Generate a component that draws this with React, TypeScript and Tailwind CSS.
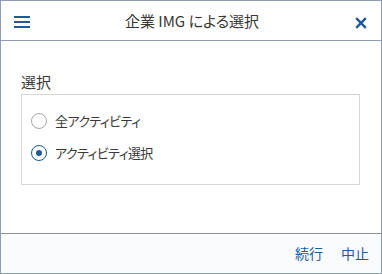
import React from "react";

const font = {
  fontFamily: '"Noto Sans CJK JP", "Noto Sans", sans-serif',
};

export default function App() {
  return (
    <div
      className="w-[382px] h-[274px] border border-[#8d9db3] flex flex-col bg-white text-[#383838] [font-feature-settings:'palt']"
      style={font}
    >
      <header className="h-[40px] border-b border-[#8d9db3] flex items-center relative shrink-0">
        <button className="absolute left-[13px] top-[15px] flex flex-col gap-[3px] w-[16px]">
          <span className="block h-[2px] w-[16px] bg-[#1d5a96]" />
          <span className="block h-[2px] w-[16px] bg-[#1d5a96]" />
          <span className="block h-[2px] w-[16px] bg-[#1d5a96]" />
        </button>
        <h1 className="flex-1 text-center text-[15px] leading-[20px] font-normal pl-[2px]">
          企業 IMG による選択
        </h1>
        <button className="absolute right-[14px] top-[16px] w-[12px] h-[12px]">
          <svg viewBox="0 0 12 12" width="12" height="12">
            <path
              d="M1.2 1.2 L10.8 10.8 M10.8 1.2 L1.2 10.8"
              stroke="#1d5a96"
              strokeWidth="2.4"
              strokeLinecap="butt"
            />
          </svg>
        </button>
      </header>

      <main className="flex-1 pt-[31px] px-[20px]">
        <div className="text-[15px] leading-[20px] mb-[2px]">選択</div>
        <div className="w-[339px] h-[91px] border border-[#d6d6d6] pt-[10px] pl-[9px]">
          <label className="h-[32px] flex items-center gap-[8px] text-[13px] tracking-[-0.6px]">
            <span className="w-[16px] h-[16px] rounded-full border-[1.5px] border-[#a8a8a8] bg-white" />
            <span>全アクティビティ</span>
          </label>
          <label className="h-[32px] flex items-center gap-[8px] text-[13px] tracking-[-0.6px]">
            <span className="w-[16px] h-[16px] rounded-full border-[1.5px] border-[#1d5a96] bg-white flex items-center justify-center">
              <span className="w-[6px] h-[6px] rounded-full bg-[#1d5a96]" />
            </span>
            <span>アクティビティ選択</span>
          </label>
        </div>
      </main>

      <footer className="h-[40px] border-t border-[#8e9298] bg-[#f9fbfd] flex items-center justify-end gap-[18px] pr-[12px] shrink-0 text-[14px] text-[#1d5a96]">
        <button>続行</button>
        <button>中止</button>
      </footer>
    </div>
  );
}
